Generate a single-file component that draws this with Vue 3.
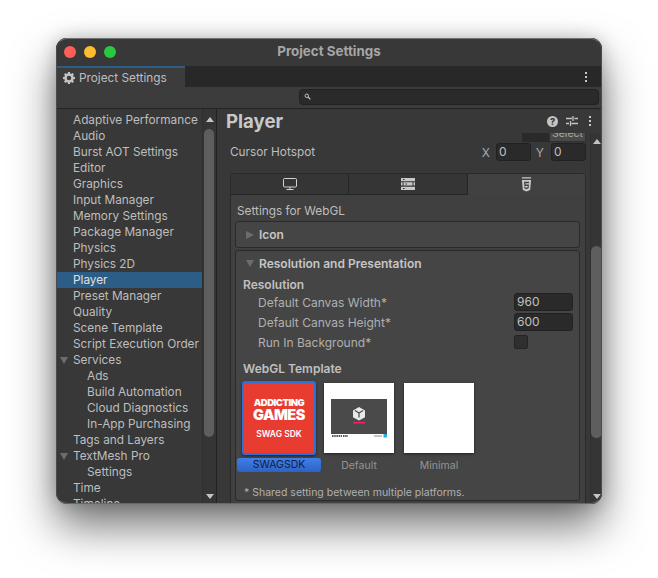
<template>
  <div class="page">
    <div class="window">
      <header class="titlebar">
        <div class="lights">
          <span class="light red"></span>
          <span class="light yellow"></span>
          <span class="light green"></span>
        </div>
        <span class="title">Project Settings</span>
      </header>

      <div class="tabstrip">
        <div class="tab">
          <svg class="gear" viewBox="0 0 24 24"><path fill="#c4c4c4" fill-rule="evenodd" d="M10 1h4l.6 3.100 1.900.8 2.600-1.800 2.800 2.800-1.800 2.600.8 1.900L24 11v4l-3.100.6-.8 1.900 1.800 2.600-2.800 2.800-2.600-1.800-1.900.8L14 25h-4l-.6-3.100-1.900-.8-2.600 1.800-2.800-2.800 1.800-2.600-.8-1.900L0 15v-4l3.100-.6.8-1.900-1.800-2.600 2.800-2.800 2.600 1.800 1.900-.8zM12 8.500a4.500 4.500 0 1 0 0 9 4.500 4.500 0 0 0 0-9z" transform="translate(0 -1)"/></svg>
          <span>Project Settings</span>
        </div>
        <span class="kebab tab-kebab"><i></i><i></i><i></i></span>
      </div>

      <div class="toolbar">
        <div class="search">
          <svg viewBox="0 0 10 10" class="search-icon"><circle cx="4" cy="4" r="2.500" fill="none" stroke="#d0d0d0" stroke-width="1.300"/><path d="M6 6l3 3" stroke="#d0d0d0" stroke-width="1.600"/></svg>
        </div>
      </div>

      <div class="body">
        <aside class="sidebar">
          <ul class="nav">
            <li
              v-for="item in navItems"
              :key="item.label"
              :class="['nav-item', { selected: item.selected, child: item.child }]"
            >
              <span v-if="item.open" class="fold"></span>
              {{ item.label }}
            </li>
          </ul>
          <div class="scrollbar side-scroll">
            <span class="arrow up"></span>
            <div class="track"><div class="thumb"></div></div>
            <span class="arrow down"></span>
          </div>
        </aside>

        <main class="main">
          <div class="main-head">
            <h1>Player</h1>
            <div class="head-icons">
              <span class="help">?</span>
              <svg class="sliders" viewBox="0 0 12 12"><path d="M0 3.500h6M8.500 3.500H12M0 8.500h3M5.500 8.500H12M7 1v5M4.500 6v5" stroke="#c4c4c4" stroke-width="1.300" fill="none"/></svg>
              <span class="kebab"><i></i><i></i><i></i></span>
            </div>
          </div>

          <div class="scroll-area">
            <div class="content">
              <div class="select-row">
                <span class="select-field"></span>
                <span class="select-btn">Select</span>
              </div>

              <div class="hotspot">
                <span>Cursor Hotspot</span>
                <div class="xy">
                  <label>X</label><span class="field small">0</span>
                  <label>Y</label><span class="field small">0</span>
                </div>
              </div>

              <section class="panel">
                <div class="platform-tabs">
                  <div class="ptab">
                    <svg class="picon" viewBox="0 0 14 12"><rect x="0.500" y="0.500" width="13" height="8.500" rx="1" fill="none" stroke="#d2d2d2" stroke-width="1"/><path d="M7 9v2.500M3.500 11.500h7" stroke="#d2d2d2" stroke-width="1"/></svg>
                  </div>
                  <div class="ptab">
                    <svg class="picon" viewBox="0 0 14 12"><path fill="#c8c8c8" d="M0 0h14v3.300H0zM2.500 4.300h9v3.300h-9zM0 8.700h14V12H0zM0 4.300h1.500v3.300H0zM12.500 4.300H14v3.300h-1.500z"/><path fill="#2c2c2c" d="M2 1h1.500v1H2zM2 10h1.500v1H2zM4.500 5.500H6v1H4.500z"/></svg>
                  </div>
                  <div class="ptab active">
                    <svg class="picon html5" viewBox="0 0 12 16"><path fill="#c8c8c8" d="M1 0h10v1.500H1z"/><path fill="#c8c8c8" fill-rule="evenodd" d="M1 3h10l-1 11-4 1.500L2 14zM3.300 5l.4 4.600h3.700l-.1 1.500-1.300.5-1.300-.5-.1-.8H3.500l.2 1.900 2.300.9 2.300-.9.4-4.100H4.900L4.800 6.500h3.900L8.800 5z"/></svg>
                  </div>
                </div>

                <div class="panel-body">
                  <p class="settings-for">Settings for WebGL</p>

                  <div class="foldout closed">
                    <span class="caret right"></span>
                    <strong>Icon</strong>
                  </div>

                  <div class="foldout open">
                    <div class="foldout-head">
                      <span class="caret"></span>
                      <strong>Resolution and Presentation</strong>
                    </div>

                    <h4 class="group">Resolution</h4>
                    <div class="prop">
                      <span>Default Canvas Width*</span>
                      <span class="field wide">960</span>
                    </div>
                    <div class="prop">
                      <span>Default Canvas Height*</span>
                      <span class="field wide">600</span>
                    </div>
                    <div class="prop">
                      <span>Run In Background*</span>
                      <span class="prop-check"><span class="check"></span></span>
                    </div>

                    <h4 class="group template-title">WebGL Template</h4>
                    <div class="templates">
                      <div class="template chosen">
                        <div class="thumb-img red">
                          <span class="logo-a">ADDICTING</span>
                          <span class="logo-b">GAMES</span>
                          <span class="logo-c">SWAG SDK</span>
                        </div>
                        <span class="template-name">SWAGSDK</span>
                      </div>
                      <div class="template">
                        <div class="thumb-img">
                          <svg class="preview" viewBox="0 0 56 42">
                            <rect x="0" y="0" width="56" height="35" fill="#4a4a4a"/>
                            <path fill="#e9e9e9" d="M28 8l6 3.400v6.800L28 21.500l-6-3.300v-6.800z"/>
                            <path d="M24 11.500l4 2.500 4-2.500M28 14v4.500" stroke="#4a4a4a" stroke-width="1.200" fill="none"/>
                            <rect x="22" y="23" width="12" height="1.500" fill="#ff1a6a"/>
                            <path d="M1 37h10M12 37h5" stroke="#555" stroke-width="2" stroke-dasharray="1.500 .7"/>
                            <path d="M43 37h8" stroke="#888" stroke-width="1"/>
                            <rect x="52.500" y="35" width="3.500" height="3.500" fill="#2aa9e0"/>
                          </svg>
                        </div>
                        <span class="template-name">Default</span>
                      </div>
                      <div class="template">
                        <div class="thumb-img"></div>
                        <span class="template-name">Minimal</span>
                      </div>
                    </div>

                    <p class="footnote">* Shared setting between multiple platforms.</p>
                  </div>
                </div>
              </section>
            </div>

            <div class="scrollbar main-scroll">
              <span class="arrow up"></span>
              <div class="track"><div class="thumb"></div></div>
              <span class="arrow down"></span>
            </div>
          </div>
        </main>
      </div>
    </div>
  </div>
</template>

<script setup>
const navItems = [
  { label: 'Adaptive Performance' },
  { label: 'Audio' },
  { label: 'Burst AOT Settings' },
  { label: 'Editor' },
  { label: 'Graphics' },
  { label: 'Input Manager' },
  { label: 'Memory Settings' },
  { label: 'Package Manager' },
  { label: 'Physics' },
  { label: 'Physics 2D' },
  { label: 'Player', selected: true },
  { label: 'Preset Manager' },
  { label: 'Quality' },
  { label: 'Scene Template' },
  { label: 'Script Execution Order' },
  { label: 'Services', open: true },
  { label: 'Ads', child: true },
  { label: 'Build Automation', child: true },
  { label: 'Cloud Diagnostics', child: true },
  { label: 'In-App Purchasing', child: true },
  { label: 'Tags and Layers' },
  { label: 'TextMesh Pro', open: true },
  { label: 'Settings', child: true },
  { label: 'Time' },
  { label: 'Timeline' }
];
</script>

<style>
html,
body {
  margin: 0;
  background: #fff;
}
</style>

<style scoped>
.page {
  box-sizing: border-box;
  width: 658px;
  height: 578px;
  padding: 38px 56px 0;
  background: #fff;
  overflow: hidden;
  font-family: Inter, "Liberation Sans", sans-serif;
  font-size: 11.8px;
  color: #bebebe;
}

.window {
  position: relative;
  width: 546px;
  height: 466px;
  display: flex;
  flex-direction: column;
  border-radius: 11px;
  overflow: hidden;
  background: #383838;
  box-shadow: 0 22px 44px rgba(0, 0, 0, 0.55), 0 0 18px rgba(0, 0, 0, 0.2);
}

/* light hairline round the window, over its contents */
.window::after {
  content: "";
  position: absolute;
  inset: 0;
  border: 1px solid #4c4c4c;
  border-top-color: #727272;
  border-bottom-color: #686868;
  border-radius: 11px;
  pointer-events: none;
}

.titlebar {
  position: relative;
  flex: 0 0 28px;
  display: flex;
  align-items: center;
  justify-content: center;
  padding-bottom: 3px;
  box-sizing: border-box;
  background: #383838;
}

.lights {
  position: absolute;
  left: 8px;
  top: 8px;
  display: flex;
  gap: 8px;
}

.light {
  width: 12px;
  height: 12px;
  border-radius: 50%;
}
.red { background: #ff5f57; }
.yellow { background: #febc2e; }
.green { background: #28c840; }

.title {
  font-size: 13.4px;
  font-weight: 700;
  color: #a6a6a6;
}

.tabstrip {
  flex: 0 0 21px;
  display: flex;
  justify-content: space-between;
  background: #282828;
}

.tab {
  box-sizing: border-box;
  width: 129px;
  display: flex;
  align-items: center;
  gap: 4px;
  padding-left: 7px;
  background: #3c3c3c;
  border-top: 2px solid #2c5d87;
}

.gear {
  width: 12px;
  height: 12px;
}

.kebab {
  display: flex;
  flex-direction: column;
  gap: 2px;
  align-items: center;
}
.kebab i {
  width: 2px;
  height: 2px;
  background: #c8c8c8;
}
.tab-kebab {
  justify-content: center;
  margin-right: 15px;
}

.toolbar {
  flex: 0 0 21px;
  box-sizing: border-box;
  display: flex;
  justify-content: flex-end;
  padding: 2px 3px 3px 0;
  background: #3c3c3c;
  border-bottom: 1px solid #232323;
}

.search {
  box-sizing: border-box;
  width: 300px;
  height: 16px;
  border-radius: 4px;
  border: 1px solid #212121;
  background: #2a2a2a;
  padding: 3px 0 0 4px;
}

.search-icon {
  display: block;
  width: 7px;
  height: 7px;
}

.body {
  flex: 1;
  min-height: 0;
  display: flex;
}

.sidebar {
  flex: 0 0 161px;
  box-sizing: border-box;
  display: flex;
  border-right: 1px solid #232323;
  overflow: hidden;
}

.nav {
  flex: 1;
  margin: 0;
  padding: 3px 0 0;
  list-style: none;
  overflow: hidden;
}

.nav-item {
  position: relative;
  height: 16px;
  line-height: 16px;
  padding-left: 17px;
  white-space: nowrap;
}
.nav-item.child {
  padding-left: 31px;
}
.nav-item.selected {
  background: #2c5d87;
  color: #e0e0e0;
}

.fold {
  position: absolute;
  left: 4px;
  top: 5px;
  border-left: 4px solid transparent;
  border-right: 4px solid transparent;
  border-top: 7px solid #6c6c6c;
}

.scrollbar {
  box-sizing: border-box;
  display: flex;
  flex-direction: column;
  align-items: center;
  background: #353535;
}

.side-scroll {
  flex: 0 0 14px;
  border-left: 1px solid #2f2f2f;
}

.track {
  flex: 1;
  width: 100%;
  min-height: 0;
}

.side-scroll .track {
  padding: 7px 2px 0 1px;
  box-sizing: border-box;
}
.side-scroll .thumb {
  height: 308px;
}

.thumb {
  border-radius: 6px;
  background: #5e5e5e;
}

.arrow {
  flex: none;
  width: 0;
  height: 0;
  border-left: 4px solid transparent;
  border-right: 4px solid transparent;
}
.arrow.up {
  margin-top: 8px;
  border-bottom: 5px solid #c4c4c4;
}
.arrow.down {
  margin-bottom: 5px;
  border-top: 5px solid #c4c4c4;
}

.main {
  flex: 1;
  min-width: 0;
  display: flex;
  flex-direction: column;
}

.main-head {
  flex: 0 0 24px;
  display: flex;
  align-items: center;
  justify-content: space-between;
  padding: 0 11px 0 9px;
}

.main-head h1 {
  margin: 0;
  font-size: 18.6px;
  font-weight: 700;
  color: #c8c8c8;
}

.head-icons {
  display: flex;
  align-items: center;
  gap: 9px;
}

.help {
  width: 11px;
  height: 11px;
  margin-right: -1px;
  border-radius: 50%;
  background: #c4c4c4;
  color: #383838;
  font-size: 9px;
  font-weight: 800;
  line-height: 11px;
  text-align: center;
}

.sliders {
  width: 12px;
  height: 12px;
  margin-right: 2px;
}

.scroll-area {
  flex: 1;
  min-height: 0;
  display: flex;
}

.content {
  flex: 1;
  min-width: 0;
  overflow: hidden;
  padding: 0 4px 0 13px;
}

.select-row {
  display: flex;
  justify-content: flex-end;
  height: 9px;
  overflow: hidden;
}

.select-field {
  width: 27px;
  background: #2a2a2a;
}

.select-btn {
  box-sizing: border-box;
  width: 37px;
  height: 9px;
  background: #4a4a4a;
  border: 1px solid #2f2f2f;
  border-top: 0;
  font-size: 10.5px;
  line-height: 2px;
  text-align: center;
  color: #a8a8a8;
}

.hotspot {
  display: flex;
  justify-content: space-between;
  align-items: center;
  height: 18px;
  margin-top: 1px;
}

.xy {
  display: flex;
  align-items: center;
}
.xy label {
  width: 14px;
  margin-right: 6px;
  text-align: right;
  font-size: 12px;
  color: #aaa;
}
.xy label + .field + label {
  margin-left: -1px;
  margin-right: 7px;
}

.field {
  box-sizing: border-box;
  display: block;
  height: 18px;
  line-height: 16px;
  padding-left: 2px;
  background: #2a2a2a;
  border: 1px solid #212121;
  border-radius: 3px;
  font-size: 12px;
  color: #c0c0c0;
}
.field.small {
  width: 35px;
}
.field.wide {
  width: 59px;
}

.panel {
  box-sizing: border-box;
  height: 340px;
  margin-top: 12px;
  background: #404040;
  border: 1px solid #2a2a2a;
  border-radius: 3px 3px 0 0;
  border-bottom: 0;
}

.platform-tabs {
  display: grid;
  grid-template-columns: 118px 119px 1fr;
  height: 21px;
}

.ptab {
  display: flex;
  align-items: center;
  justify-content: center;
  background: #353535;
  border-right: 1px solid #242424;
  border-bottom: 1px solid #242424;
}
.ptab.active {
  background: #414141;
  border-color: transparent;
}

.picon {
  width: 14px;
  height: 12px;
}
.picon.html5 {
  width: 11px;
  height: 15px;
}

.panel-body {
  padding: 0 4px;
}

.settings-for {
  margin: 0;
  height: 26px;
  line-height: 33px;
  padding-left: 2px;
}

.foldout {
  box-sizing: border-box;
  width: 345px;
  background: #454545;
  border: 1px solid #2a2a2a;
  border-radius: 3px;
}
.foldout strong {
  font-size: 12px;
  font-weight: 600;
  color: #c6c6c6;
}
.foldout.closed {
  height: 27px;
  display: flex;
  align-items: center;
  gap: 5px;
  padding-left: 10px;
}
.foldout.open {
  height: 251px;
  margin-top: 2px;
  overflow: hidden;
}
.foldout-head {
  box-sizing: border-box;
  height: 26px;
  display: flex;
  align-items: center;
  gap: 5px;
  padding: 0 0 2px 10px;
}

.caret {
  width: 0;
  height: 0;
  border-left: 4px solid transparent;
  border-right: 4px solid transparent;
  border-top: 7px solid #6c6c6c;
}
.caret.right {
  border-top: 4px solid transparent;
  border-bottom: 4px solid transparent;
  border-left: 8px solid #6c6c6c;
  border-right: 0;
}

.group {
  margin: 0;
  padding-left: 7px;
  font-size: 12px;
  line-height: 15px;
  font-weight: 600;
  color: #c0c0c0;
}

.prop {
  height: 20px;
  display: flex;
  align-items: center;
  justify-content: space-between;
  padding: 0 6px 0 22px;
  font-size: 12px;
  color: #b0b0b0;
}

.prop-check {
  width: 59px;
}

.check {
  display: block;
  width: 14px;
  height: 14px;
  box-sizing: border-box;
  background: #2f2f2f;
  border: 1px solid #242424;
  border-radius: 2px;
}

.template-title {
  margin-top: 9px;
  line-height: 16px;
}

.templates {
  display: flex;
  margin-top: 4px;
  padding-left: 1px;
}

.template {
  width: 80px;
  display: flex;
  flex-direction: column;
  align-items: center;
}
.template:nth-child(2) {
  margin-left: -2px;
}

.template.chosen {
  width: 84px;
}

.thumb-img {
  box-sizing: border-box;
  width: 70px;
  height: 70px;
  margin-top: 2px;
  display: flex;
  align-items: center;
  justify-content: center;
  background: #fff;
  box-shadow: 0 1px 3px rgba(0, 0, 0, 0.5);
}

.thumb-img.red {
  width: 74px;
  height: 74px;
  margin-top: 0;
  padding-top: 3px;
  flex-direction: column;
  background: #e83c30;
  border: 2px solid #2f6fd8;
  border-radius: 3px;
  color: #fff;
}

.logo-a {
  font-size: 9.5px;
  font-weight: 900;
  line-height: 10px;
  margin-top: -3px;
  letter-spacing: -0.5px;
}
.logo-b {
  font-size: 14.5px;
  font-weight: 900;
  line-height: 14px;
  letter-spacing: -0.5px;
}
.logo-c {
  margin-top: 8px;
  font-size: 8.5px;
  font-weight: 600;
  line-height: 9px;
}

.preview {
  width: 56px;
  height: 42px;
  margin-top: 4px;
}

.template-name {
  margin-top: 6px;
  height: 14px;
  line-height: 14px;
  font-size: 10.5px;
  color: #949494;
}

.chosen .template-name {
  box-sizing: border-box;
  width: 84px;
  margin-top: 3px;
  border-radius: 3px;
  text-align: center;
  background: linear-gradient(#3f7fe8, #2d62c4);
  color: #14213a;
}

.footnote {
  margin: 13px 0 0;
  padding-left: 8px;
  font-size: 10.5px;
  color: #b0b0b0;
}

.main-scroll {
  flex: 0 0 12px;
  border-left: 1px solid #2f2f2f;
}
.main-scroll .arrow.up {
  margin-top: 6px;
}
.main-scroll .track {
  box-sizing: border-box;
  padding: 102px 0 0;
}
.main-scroll .thumb {
  height: 192px;
}
</style>
